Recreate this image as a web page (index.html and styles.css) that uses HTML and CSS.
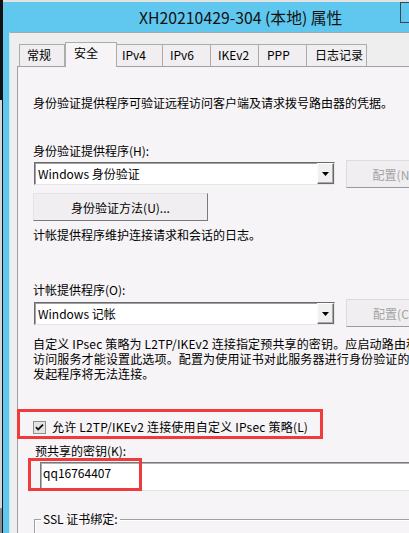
FILE: index.html
```html
<!DOCTYPE html>
<html lang="zh-CN">
<head>
<meta charset="utf-8">
<title>属性</title>
<link rel="stylesheet" href="styles.css">
</head>
<body>
<div class="screen">
  <div class="desk"></div>
  <div class="window">
    <div class="titlebar">
      <span class="title">XH20210429-304 (本地) 属性</span>
      <span class="close-btn"></span>
    </div>
    <div class="client">
      <div class="tabs">
        <div class="tab w-general">常规</div>
        <div class="tab active w-sec">安全</div>
        <div class="tab w-ipv4">IPv4</div>
        <div class="tab w-ipv6">IPv6</div>
        <div class="tab w-ike">IKEv2</div>
        <div class="tab w-ppp">PPP</div>
        <div class="tab w-log">日志记录</div>
      </div>
      <div class="panel">
        <p class="line intro">身份验证提供程序可验证远程访问客户端及请求拨号路由器的凭据。</p>
        <p class="line label-auth">身份验证提供程序(H):</p>
        <div class="row">
          <div class="select">
            <span class="select-text">Windows 身份验证</span>
            <span class="arrow"><svg width="7" height="4" viewBox="0 0 7 4"><path d="M0 0h7L3.5 4z" fill="#000"/></svg></span>
          </div>
          <div class="btn disabled">配置(N)</div>
        </div>
        <div class="btn method">身份验证方法(U)...</div>
        <p class="line acct-desc">计帐提供程序维护连接请求和会话的日志。</p>
        <p class="line label-acct">计帐提供程序(O):</p>
        <div class="row row-acct">
          <div class="select">
            <span class="select-text">Windows 记帐</span>
            <span class="arrow"><svg width="7" height="4" viewBox="0 0 7 4"><path d="M0 0h7L3.5 4z" fill="#000"/></svg></span>
          </div>
          <div class="btn disabled">配置(C)</div>
        </div>
        <p class="para">自定义 IPsec 策略为 L2TP/IKEv2 连接指定预共享的密钥。应启动路由和<br>访问服务才能设置此选项。配置为使用证书对此服务器进行身份验证的<br>发起程序将无法连接。</p>
        <div class="check-row">
          <span class="checkbox"><svg width="13" height="13" viewBox="0 0 13 13"><rect x="0.5" y="0.5" width="12" height="12" fill="#e4e4e4" stroke="#8e8f8f"/><path d="M3 6.2l2.2 2.3L10 3.6" fill="none" stroke="#111" stroke-width="1.8"/></svg></span>
          <span class="check-label">允许 L2TP/IKEv2 连接使用自定义 IPsec 策略(L)</span>
        </div>
        <p class="line psk-label">预共享的密钥(K):</p>
        <div class="input">qq16764407</div>
        <fieldset class="group"><legend>SSL 证书绑定:</legend></fieldset>
        <span class="mark mark-check"></span>
        <span class="mark mark-key"></span>
      </div>
    </div>
  </div>
</div>
</body>
</html>
```
FILE: styles.css
```css
* { box-sizing: border-box; }
html, body { margin: 0; padding: 0; }
body {
  width: 409px;
  height: 533px;
  overflow: hidden;
  background: #60c8ee;
  font-family: "Noto Sans CJK SC", "Microsoft YaHei", sans-serif;
  font-size: 12px;
  color: #000;
}
.screen { display: flex; width: 409px; height: 533px; overflow: hidden; }
.desk {
  flex: 0 0 3px;
  background: linear-gradient(#111 0 100px, #d6d6d6 100px 508px, #8c8c8c 508px);
  border-right: 1px solid #111;
}
.window {
  flex: 0 0 406px;
  display: flex;
  flex-direction: column;
  background: #60c8ee;
  border-top: 2px solid #e2e2e2;
  overflow: hidden;
}
.titlebar {
  position: relative;
  flex: 0 0 30px;
  height: 30px;
  display: flex;
  align-items: center;
  padding-left: 136px;
  font-size: 15.8px;
  color: #111;
  white-space: nowrap;
}
.close-btn {
  position: absolute;
  left: 397px;
  top: 0;
  width: 24px;
  height: 21px;
  border: 1px solid #34495a;
}
.client {
  flex: 1 1 auto;
  min-height: 0;
  overflow: hidden;
  margin-left: 6px;
  border-left: 1px solid #c9e7f3;
  border-top: 1px solid #a9a9a9;
  background: #efeeef;
  display: flex;
  flex-direction: column;
}
.tabs {
  flex: 0 0 34px;
  display: flex;
  align-items: flex-end;
  height: 34px;
  padding: 9px 0 0 9px;
}
.tab {
  height: 22px;
  margin-bottom: 1px;
  border: 1px solid #acacac;
  border-bottom: none;
  background: #f0eef0;
  line-height: 20px;
  padding-left: 7px;
  white-space: nowrap;
}
.tab.active {
  height: 25px;
  margin-bottom: 0;
  background: #f6f4f6;
  position: relative;
  z-index: 2;
  padding-left: 8px;
}
.w-general { width: 46px; }
.w-sec { width: 52px; }
.w-ipv4 { width: 47px; margin-left: -1px; padding-left: 5px; }
.w-ipv6 { width: 49px; margin-left: -1px; }
.w-ike { width: 49px; margin-left: -1px; }
.w-ppp { width: 49px; margin-left: -1px; padding-left: 8px; }
.w-log { width: 61px; margin-left: -1px; padding-left: 8px; }

.panel {
  position: relative;
  flex: 0 0 auto;
  margin: -1px 0 0 7px;
  width: 440px;
  height: 480px;
  border: 1px solid #a0a0a0;
  background: #f6f4f6;
  padding-left: 15px;
  white-space: nowrap;
}
p { margin: 0; }
.line { line-height: 16px; }
.intro { margin-top: 28px; }
.label-auth { margin-top: 32px; }
.row { display: flex; align-items: flex-start; margin-top: 1px; height: 28px; }
.select {
  display: flex;
  align-items: center;
  width: 301px;
  height: 23px;
  margin: 2px 0 0 1px;
  background: #fff;
  border: 1px solid;
  border-color: #6b6b6b #e6e6e6 #e6e6e6 #6b6b6b;
  box-shadow: inset 1px 1px 0 #a0a0a0;
}
.select-text { flex: 1; padding-left: 3px; line-height: 16px; }
.arrow {
  width: 17px;
  height: 21px;
  display: flex;
  align-items: center;
  justify-content: center;
  background: #f0f0f0;
  border: 1px solid;
  border-color: #fdfdfd #6a6a6a #6a6a6a #fdfdfd;
  box-shadow: inset -1px -1px 0 #a8a8a8;
}
.btn {
  display: flex;
  align-items: center;
  justify-content: center;
  height: 28px;
  border: 1px solid;
  background: #f0eef0;
}
.btn.disabled {
  width: 94px;
  margin-left: 11px;
  color: #a3a3a3;
  border-color: #dcdcdc #b4b4b4 #9a9a9a #dcdcdc;
}
.btn.method {
  width: 175px;
  margin-top: 5px;
  border-color: #e3e3e3 #7a7a7a #7a7a7a #e3e3e3;
}
.acct-desc { margin-top: 6px; }
.label-acct { margin-top: 39px; }
.row-acct .select { margin-top: 3px; }
.para { margin-top: 9px; line-height: 15px; letter-spacing: 0.15px; }
.check-row {
  display: flex;
  align-items: center;
  gap: 6px;
  height: 16px;
  margin-top: 38px;
  line-height: 16px;
}
.check-label { letter-spacing: 0.2px; }
.checkbox { display: flex; width: 13px; height: 13px; }
.psk-label { margin-top: 8px; padding-left: 2px; }
.input {
  margin: 3px 0 0 7px;
  width: 400px;
  height: 29px;
  background: #fff;
  border: 1px solid;
  border-color: #7a7a7a #e3e3e3 #e3e3e3 #7a7a7a;
  box-shadow: inset 1px 1px 0 #b0b0b0;
  padding: 2px 0 0 2px;
  line-height: 16px;
}
.group {
  margin: 20px 0 0 1px;
  padding: 0;
  width: 400px;
  height: 60px;
  border: 1px solid #a0a0a0;
  box-shadow: inset 1px 1px 0 #fff;
}
.group legend { padding: 0 2px; margin-left: 6px; line-height: 16px; }
.mark {
  position: absolute;
  border: 3px solid #ef3b3b;
}
.mark-check { left: -1px; top: 342px; width: 306px; height: 30px; }
.mark-key { left: 10px; top: 391px; width: 114px; height: 33px; }
```
